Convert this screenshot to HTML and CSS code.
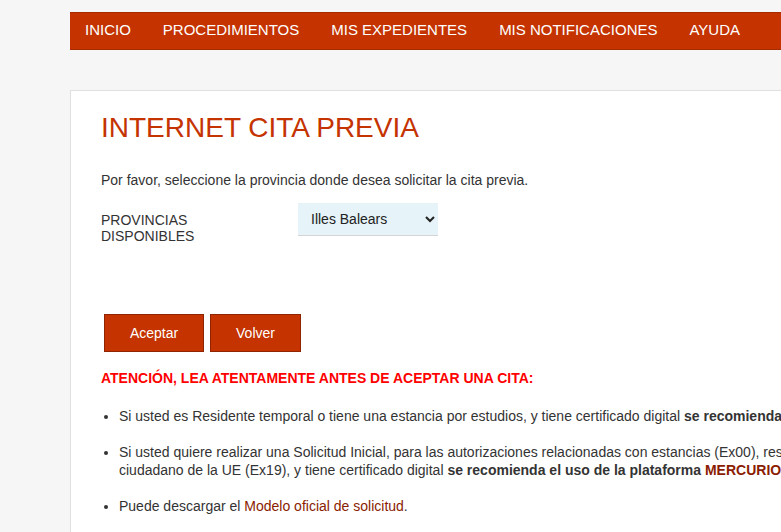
FILE: index.html
```html
<!DOCTYPE html>
<html lang="es">
<head>
    <meta charset="UTF-8">
    <meta name="viewport" content="width=device-width, initial-scale=1.0">
    <title>Internet Cita Previa</title>
    <link rel="stylesheet" href="styles.css">
</head>
<body>
    <div class="page">
        <nav class="main-nav">
            <a href="#">INICIO</a>
            <a href="#">PROCEDIMIENTOS</a>
            <a href="#">MIS EXPEDIENTES</a>
            <a href="#">MIS NOTIFICACIONES</a>
            <a href="#">AYUDA</a>
        </nav>

        <div class="panel">
            <h1>INTERNET CITA PREVIA</h1>
            <p class="intro">Por favor, seleccione la provincia donde desea solicitar la cita previa.</p>

            <form class="form-row">
                <label for="provincia">PROVINCIAS DISPONIBLES</label>
                <select id="provincia" class="select-prov">
                    <option>Illes Balears</option>
                    <option>Madrid</option>
                    <option>Barcelona</option>
                </select>
            </form>

            <div class="buttons">
                <button class="btn">Aceptar</button>
                <button class="btn btn-volver">Volver</button>
            </div>

            <p class="warning">ATENCIÓN, LEA ATENTAMENTE ANTES DE ACEPTAR UNA CITA:</p>

            <ul class="notes">
                <li>Si usted es Residente temporal o tiene una estancia por estudios, y tiene certificado digital <b>se recomienda el uso de la plataforma <a class="strong-link" href="#">MERCURIO</a></b> para presentar su solicitud.</li>
                <li>Si usted quiere realizar una Solicitud Inicial, para las autorizaciones relacionadas con estancias (Ex00), residencia y trabajo (Ex01, Ex03, Ex07), o tarjeta de familiar de<br>ciudadano de la UE (Ex19), y tiene certificado digital <b>se recomienda el uso de la plataforma <a class="strong-link" href="#">MERCURIO</a></b> para presentar su solicitud.</li>
                <li>Puede descargar el <a href="#">Modelo oficial de solicitud</a>.</li>
            </ul>
        </div>
    </div>
</body>
</html>
```

FILE: styles.css
```css
html, body {
    overflow-x: hidden;
}
body {
    font-family: 'Liberation Sans', Arial, sans-serif;
    background: #f6f6f6;
    color: #333;
    margin: 0;
    padding: 0;
    font-size: 14px;
}
.page {
    width: 1170px;
    margin-left: 70px;
    padding-top: 12px;
}
.main-nav {
    display: flex;
    height: 36px;
    align-items: center;
    background: #c43300;
    border-top: 1px solid #a52b00;
    border-bottom: 1px solid #a52b00;
    padding-left: 15px;
}
.main-nav a {
    color: #fff;
    text-decoration: none;
    font-size: 15px;
    margin-right: 32px;
    line-height: 16px;
    margin-top: -2px;
}
.panel {
    margin-top: 40px;
    background: #fff;
    border: 1px solid #e0e0e0;
    padding: 22px 30px 20px 30px;
}
h1 {
    margin: 0;
    color: #c43300;
    font-weight: normal;
    font-size: 28px;
    line-height: 30px;
}
.intro {
    margin: 28px 0 0 0;
    line-height: 18px;
}
.form-row {
    display: flex;
    align-items: flex-start;
    margin-top: 14px;
}
.form-row label {
    width: 110px;
    margin-right: 87px;
    line-height: 16px;
    padding-top: 9px;
    color: #333;
}
.select-prov {
    width: 140px;
    height: 33px;
    background: #e6f3f8;
    border: none;
    border-bottom: 1px solid #d5d5d5;
    font-family: 'Liberation Sans', Arial, sans-serif;
    font-size: 14px;
    color: #222;
    padding: 0 6px 0 9px;
}
.buttons {
    display: flex;
    gap: 6px;
    margin-top: 70px;
    margin-left: 3px;
}
.btn {
    width: 100px;
    height: 38px;
    background: #c43300;
    color: #fff;
    border: 1px solid #8f2500;
    font-family: 'Liberation Sans', Arial, sans-serif;
    font-size: 14px;
    cursor: pointer;
}
.btn-volver {
    width: 91px;
}
.warning {
    margin: 17px 0 0 0;
    color: #ff0000;
    font-weight: bold;
    line-height: 18px;
}
.notes {
    margin: 20px 0 0 0;
    padding-left: 18px;
    line-height: 18px;
}
.notes li {
    margin-bottom: 18px;
}
.notes a {
    color: #8a1c00;
    text-decoration: none;
}
.notes b {
    color: #333;
}
.notes a.strong-link {
    color: #8a1c00;
}
```
